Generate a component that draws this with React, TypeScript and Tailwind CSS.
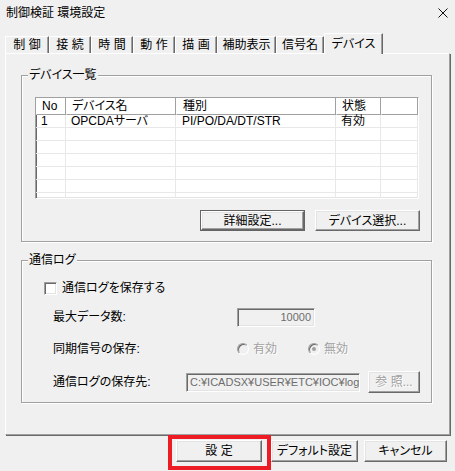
import type { ReactNode } from 'react';

const tabs = [
  { label: '制 御', w: 'w-[44px]' },
  { label: '接 続', w: 'w-[42px]' },
  { label: '時 間', w: 'w-[42px]' },
  { label: '動 作', w: 'w-[42px]' },
  { label: '描 画', w: 'w-[42px]' },
  { label: '補助表示', w: 'w-[59px]' },
  { label: '信号名', w: 'w-[48px]' },
  { label: 'デバイス', w: 'w-[59px]', active: true },
];

const columns = [
  { label: 'No', w: 'w-[30px]', pad: 'pl-[5px]' },
  { label: 'デバイス名', w: 'w-[110px]', pad: 'pl-[5px]' },
  { label: '種別', w: 'w-[160px]', pad: 'pl-[6px]' },
  { label: '状態', w: 'w-[45px]', pad: 'pl-[5px]' },
  { label: '', w: 'flex-1', pad: '' },
];

const devices = [['1', 'OPCDAサーバ', 'PI/PO/DA/DT/STR', '有効']];

// classic raised 3D edge
const raised =
  'border border-t-white border-l-white border-r-[#696969] border-b-[#696969] shadow-[inset_-1px_-1px_0_#a0a0a0,inset_1px_1px_0_#e3e3e3]';
// classic sunken 3D edge
const sunken =
  'border border-t-[#a0a0a0] border-l-[#a0a0a0] border-r-white border-b-white shadow-[inset_1px_1px_0_#696969,inset_-1px_-1px_0_#e3e3e3]';

function Btn({ children, w, h = 'h-[21px]', disabled }: { children: ReactNode; w: string; h?: string; disabled?: boolean }) {
  return (
    <button
      className={`${w} ${h} ${raised} flex items-center justify-center bg-[#f0f0f0] leading-none ${
        disabled ? 'text-[#a0a0a0] [text-shadow:1px_1px_0_#fff]' : 'text-black'
      }`}
    >
      {children}
    </button>
  );
}

function Radio({ checked, label }: { checked?: boolean; label: string }) {
  return (
    <div className="flex items-center gap-[4px]">
      <span className="flex h-[12px] w-[12px] items-center justify-center rounded-full border border-t-[#a0a0a0] border-l-[#a0a0a0] border-r-white border-b-white bg-[#f0f0f0] shadow-[inset_1px_1px_0_#696969]">
        {checked && <span className="h-[4px] w-[4px] rounded-full bg-[#a0a0a0]" />}
      </span>
      <span className="text-[#a0a0a0] [text-shadow:1px_1px_0_#fff]">{label}</span>
    </div>
  );
}

function Group({ title, children, className = '' }: { title: string; children: ReactNode; className?: string }) {
  return (
    <fieldset
      className={`w-[411px] border border-[#a0a0a0] shadow-[inset_1px_1px_0_#fff,1px_1px_0_#fff] ${className}`}
    >
      <legend className="ml-[6px] bg-[#f0f0f0] px-[1px] leading-[14px]">{title}</legend>
      {children}
    </fieldset>
  );
}

export default function App() {
  return (
    <div className="h-[471px] w-[455px] overflow-hidden bg-[#f0f0f0] font-['Liberation_Sans','Noto_Sans_CJK_JP',sans-serif] text-[12px] text-black [font-feature-settings:'palt']">
      {/* title bar */}
      <div className="flex h-[26px] items-center justify-between pl-[6px] pr-[7px]">
        <span>制御検証 環境設定</span>
        <svg width="10" height="10" viewBox="0 0 10 10" className="block">
          <path d="M0.5 0.5 L9.5 9.5 M9.5 0.5 L0.5 9.5" stroke="#111" strokeWidth="1" fill="none" />
        </svg>
      </div>

      {/* tab strip */}
      <div className="flex h-[27px] items-end pl-[5px]">
        {tabs.map((t) => (
          <div
            key={t.label}
            className={`${t.w} ${
              t.active ? 'relative z-10 -mb-[1px] h-[21px]' : 'h-[17px]'
            } flex items-center justify-center border-t border-l border-r border-t-white border-l-white border-r-[#696969] bg-[#f0f0f0] shadow-[inset_-1px_0_0_#a0a0a0] whitespace-nowrap`}
          >
            {t.label}
          </div>
        ))}
      </div>

      {/* tab page */}
      <div className="mx-[5px] h-[382px] border border-t-white border-l-white border-r-[#a0a0a0] border-b-[#a0a0a0] px-[15px] pt-[14px] shadow-[1px_1px_0_#696969]">
        <Group title="デバイス一覧" className="pb-[10px]">
          <div className={`ml-[13px] mt-[15px] h-[102px] w-[384px] overflow-hidden bg-white ${sunken}`}>
            <div className="flex h-[17px]">
              {columns.map((c, i) => (
                <div
                  key={i}
                  className={`${c.w} ${c.pad} flex h-full items-center border-l border-r border-b border-l-white border-r-[#a0a0a0] border-b-[#a0a0a0] bg-white leading-none`}
                >
                  {c.label}
                </div>
              ))}
            </div>
            {Array.from({ length: 7 }).map((_, r) => (
              <div key={r} className="flex h-[13px] border-b border-[#e8e8e8]">
                {columns.map((c, i) => (
                  <div
                    key={i}
                    className={`${c.w} ${c.pad} h-full whitespace-nowrap border-r border-[#e8e8e8] leading-[13px]`}
                  >
                    {devices[r]?.[i] ?? ''}
                  </div>
                ))}
              </div>
            ))}
          </div>
          <div className="mt-[11px] flex justify-end gap-[10px] pr-[11px]">
            <div className="border border-[#646464]">
              <Btn w="w-[103px]" h="h-[19px]">詳細設定...</Btn>
            </div>
            <Btn w="w-[105px]">デバイス選択...</Btn>
          </div>
        </Group>

        <Group title="通信ログ" className="mt-[11px] pb-[9px]">
          <div className="mt-[14px] flex h-[14px] items-center gap-[5px] pl-[22px]">
            <span className={`h-[13px] w-[13px] bg-white ${sunken}`} />
            <span>通信ログを保存する</span>
          </div>

          <div className="mt-[12px] flex h-[20px] items-center pl-[31px]">
            <span className="w-[184px]">最大データ数:</span>
            <div
              className={`flex h-[19px] w-[78px] items-center justify-end bg-[#f0f0f0] pr-[3px] text-[11px] text-[#6d6d6d] ${sunken}`}
            >
              10000
            </div>
          </div>

          <div className="mt-[12px] flex h-[20px] items-center pl-[31px]">
            <span className="w-[184px]">同期信号の保存:</span>
            <div className="w-[71px]">
              <Radio label="有効" />
            </div>
            <Radio checked label="無効" />
          </div>

          <div className="mt-[12px] flex h-[22px] items-center pl-[31px]">
            <span className="w-[133px]">通信ログの保存先:</span>
            <div
              className={`flex h-[19px] w-[174px] items-center overflow-hidden whitespace-nowrap bg-[#f0f0f0] pl-[3px] text-[11px] text-[#6d6d6d] ${sunken}`}
            >
              C:¥ICADSX¥USER¥ETC¥IOC¥log¥
            </div>
            <div className="ml-[8px]">
              <Btn w="w-[52px]" h="h-[22px]" disabled>
                参 照...
              </Btn>
            </div>
          </div>
        </Group>
      </div>

      {/* dialog buttons */}
      <div className="flex items-start pl-[168px]">
        <div className="h-[35px] w-[103px] border-4 border-[#ed1c24] pl-[4px] pt-[1px]">
          <Btn w="w-[86px]" h="h-[22px]">設 定</Btn>
        </div>
        <div className="mt-[5px]">
          <Btn w="w-[87px]" h="h-[22px]">デフォルト設定</Btn>
        </div>
        <div className="ml-[6px] mt-[5px]">
          <Btn w="w-[83px]" h="h-[22px]">キャンセル</Btn>
        </div>
      </div>
    </div>
  );
}
